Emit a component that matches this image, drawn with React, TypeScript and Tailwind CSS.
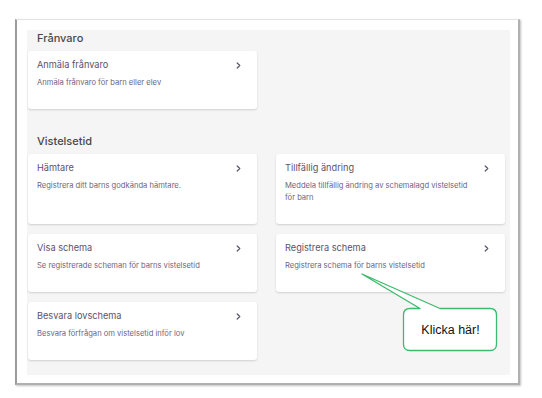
const font = { fontFamily: "Inter, 'Noto Sans', sans-serif" };

type Item = { title: string; text: string };

function Chevron() {
  return (
    <svg width="5" height="7" viewBox="0 0 5 7" className="mt-[3px] shrink-0">
      <path d="M1.2 1 L3.8 3.5 L1.2 6" fill="none" stroke="#5a5468" strokeWidth="1.2" strokeLinecap="round" strokeLinejoin="round" />
    </svg>
  );
}

function Card({ item }: { item: Item }) {
  return (
    <div className="flex rounded-[3px] bg-white pt-[8px] pr-[16px] pb-[20px] pl-[9px] shadow-[0_1px_2px_rgba(60,60,90,0.2)]">
      <div className="flex-1">
        <div className="text-[9.2px] leading-[12px] text-[#5b526c]">{item.title}</div>
        <div className="mt-[6px] w-[192px] text-[7.6px] leading-[12px] text-[#6d6582]">{item.text}</div>
      </div>
      <Chevron />
    </div>
  );
}

const vistelse: Item[] = [
  { title: "Hämtare", text: "Registrera ditt barns godkända hämtare." },
  { title: "Tillfällig ändring", text: "Meddela tillfällig ändring av schemalagd vistelsetid för barn" },
  { title: "Visa schema", text: "Se registrerade scheman för barns vistelsetid" },
  { title: "Registrera schema", text: "Registrera schema för barns vistelsetid" },
  { title: "Besvara lovschema", text: "Besvara förfrågan om vistelsetid inför lov" },
];

export default function App() {
  return (
    <div className="relative h-[398px] w-[542px] overflow-hidden bg-white" style={font}>
      <div className="ml-[15px] mt-[19px] h-[366px] w-[505px] border-t border-l-2 border-r-2 border-b-2 border-t-[#e2e2e2] border-l-[#9c9c9c] border-r-[#b0b0b0] border-b-[#b0b0b0] bg-white pt-[10px] pl-[10px] shadow-[1px_1px_2px_rgba(0,0,0,0.25)]">
        <div className="h-[345px] w-[483px] bg-[#f5f5f5] pt-[1px] pr-[5px] pl-[1px]">
          <h2 className="pl-[9px] text-[11px] leading-[14px] font-medium text-[#47474d]">Frånvaro</h2>
          <div className="mt-[6px] grid grid-cols-2 gap-x-[19px]">
            <Card item={{ title: "Anmäla frånvaro", text: "Anmäla frånvaro för barn eller elev" }} />
          </div>
          <h2 className="mt-[25px] pl-[9px] text-[11px] leading-[14px] font-medium text-[#47474d]">Vistelsetid</h2>
          <div className="mt-[6px] grid grid-cols-2 gap-x-[19px] gap-y-[10px]">
            {vistelse.map((item) => (
              <Card key={item.title} item={item} />
            ))}
          </div>
        </div>
      </div>

      <svg className="pointer-events-none absolute inset-0" width="542" height="398">
        <path
          d="M410 308.5 L420 308.5 L362 274 L440 308.5 L490 308.5 Q496.5 308.5 496.5 315 L496.5 344 Q496.5 350.5 490 350.5 L410 350.5 Q403.5 350.5 403.5 344 L403.5 315 Q403.5 308.5 410 308.5 Z"
          fill="white"
          stroke="#3dba6b"
          strokeWidth="1.3"
          strokeLinejoin="round"
        />
      </svg>
      <div
        className="absolute top-[322px] left-[404px] w-[93px] text-center text-[12.5px] leading-[16px] text-[#111]"
        style={{ fontFamily: "'Liberation Sans', Arial, sans-serif" }}
      >
        Klicka här!
      </div>
    </div>
  );
}
